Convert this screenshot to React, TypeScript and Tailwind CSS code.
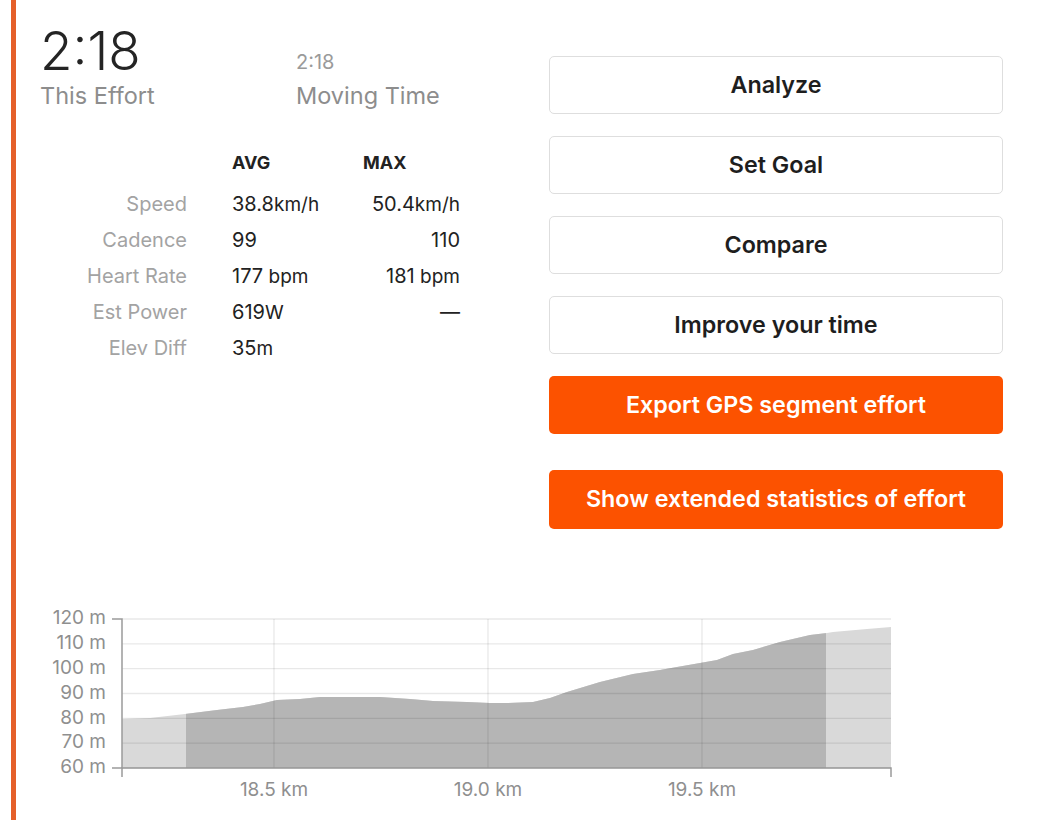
import React from "react";

const stats = [
  { label: "Speed", avg: "38.8", avgUnit: "km/h", max: "50.4", maxUnit: "km/h" },
  { label: "Cadence", avg: "99", avgUnit: "", max: "110", maxUnit: "" },
  { label: "Heart Rate", avg: "177", avgUnit: " bpm", max: "181", maxUnit: " bpm" },
  { label: "Est Power", avg: "619", avgUnit: "W", max: "—", maxUnit: "" },
  { label: "Elev Diff", avg: "35", avgUnit: "m", max: "", maxUnit: "" },
];

const buttons = ["Analyze", "Set Goal", "Compare", "Improve your time"];

// elevation profile, page coordinates
const profile: [number, number][] = [
  [122, 719], [150, 718], [185, 714], [217, 710], [243, 707], [260, 704], [277, 700],
  [300, 699], [320, 697], [343, 697], [380, 697], [410, 699], [433, 701], [467, 702],
  [490, 703], [507, 703], [533, 702], [550, 698], [567, 692], [600, 682], [633, 674],
  [660, 670], [677, 667], [700, 663], [717, 660], [733, 654], [753, 650], [780, 642],
  [810, 635], [827, 633], [833, 632], [867, 629], [891, 627],
];

const areaPath =
  "M122,768 " + profile.map(([x, y]) => `L${x},${y}`).join(" ") + " L891,768 Z";

const yTicks = [120, 110, 100, 90, 80, 70, 60];
const yOf = (v: number) => 768 - ((v - 60) / 60) * 149;
const xTicks = [
  { x: 274, label: "18.5 km" },
  { x: 488, label: "19.0 km" },
  { x: 702, label: "19.5 km" },
];

function ElevationChart() {
  return (
    <svg width="880" height="212" className="block">
      <defs>
        <clipPath id="area">
          <path d={areaPath} />
        </clipPath>
      </defs>
      <g transform="translate(-40,-600)" fontFamily="Inter, 'Liberation Sans', sans-serif">
        <path d={areaPath} fill="#d9d9d9" />
        <rect x="186" y="600" width="640" height="170" fill="#b5b5b5" clipPath="url(#area)" />
        {yTicks.map((v) => (
          <line key={v} x1="122" x2="891" y1={yOf(v)} y2={yOf(v)} stroke="rgba(0,0,0,0.09)" strokeWidth="1.3" />
        ))}
        {xTicks.map((t) => (
          <line key={t.x} x1={t.x} x2={t.x} y1="619" y2="768" stroke="rgba(0,0,0,0.09)" strokeWidth="1.3" />
        ))}
        <path d="M112,619 H122 V768 H112" fill="none" stroke="#9a9a9a" strokeWidth="1.5" />
        <path d="M122,777 V768 H891 V777" fill="none" stroke="#9a9a9a" strokeWidth="1.5" />
        {yTicks.map((v) => (
          <text key={v} x="106" y={yOf(v)} textAnchor="end" dominantBaseline="middle" fontSize="19" fill="#8f8f8f">
            {v} m
          </text>
        ))}
        {xTicks.map((t) => (
          <text key={t.x} x={t.x} y="791" textAnchor="middle" dominantBaseline="middle" fontSize="19" fill="#8f8f8f">
            {t.label}
          </text>
        ))}
      </g>
    </svg>
  );
}

export default function App() {
  return (
    <div className="flex h-[820px] overflow-hidden bg-white font-['Inter','Liberation_Sans',sans-serif] text-[#222]">
      <div className="ml-[11px] w-[5px] shrink-0 bg-[#e5602a]" />
      <div className="flex flex-1 flex-col pl-[24px]">
        <div className="flex">
          {/* left: times and stats */}
          <div className="w-[509px] shrink-0 pt-[21px]">
            <div className="flex items-end">
              <div className="w-[256px]">
                <div className="text-[53px] font-light leading-[60px] text-[#242424]">2:18</div>
                <div className="text-[23.5px] leading-[30px] text-[#8d8d8d]">This Effort</div>
              </div>
              <div>
                <div className="mb-[6px] text-[20px] leading-[26px] text-[#9a9a9a]">2:18</div>
                <div className="text-[23.5px] leading-[30px] text-[#8d8d8d]">Moving Time</div>
              </div>
            </div>

            <div className="mt-[34px] grid grid-cols-[147px_45px_131px_97px]">
              <div />
              <div />
              <div className="h-[36px] text-[18px] font-bold leading-[36px]">AVG</div>
              <div className="h-[36px] text-[18px] font-bold leading-[36px]">MAX</div>
            </div>
            <div className="mt-[5px] grid grid-cols-[147px_45px_131px_97px] auto-rows-[36px] text-[20px]">
              {stats.map((s) => (
                <React.Fragment key={s.label}>
                  <div className="h-[36px] text-right leading-[36px] text-[#a3a3a3]">{s.label}</div>
                  <div />
                  <div className="h-[36px] whitespace-nowrap leading-[36px] text-[#222]">
                    {s.avg}
                    <span className="text-[19px] leading-none">{s.avgUnit}</span>
                  </div>
                  <div className="h-[36px] whitespace-nowrap text-right leading-[36px] text-[#222]">
                    {s.max}
                    <span className="text-[19px] leading-none">{s.maxUnit}</span>
                  </div>
                </React.Fragment>
              ))}
            </div>
          </div>

          {/* right: actions */}
          <div className="flex w-[454px] shrink-0 flex-col gap-[22px] pt-[56px]">
            {buttons.map((b) => (
              <button
                key={b}
                className="h-[58px] rounded-[5px] border border-[#dedede] bg-white text-[23.3px] font-semibold text-[#1e1e1e]"
              >
                {b}
              </button>
            ))}
            <button className="h-[58px] rounded-[5px] bg-[#fc5200] text-[23.3px] font-semibold text-white">
              Export GPS segment effort
            </button>
            <button className="mt-[14px] h-[59px] rounded-[5px] bg-[#fc5200] text-[23.3px] font-semibold text-white">
              Show extended statistics of effort
            </button>
          </div>
        </div>

        <div className="mt-auto mb-[8px]">
          <ElevationChart />
        </div>
      </div>
    </div>
  );
}
